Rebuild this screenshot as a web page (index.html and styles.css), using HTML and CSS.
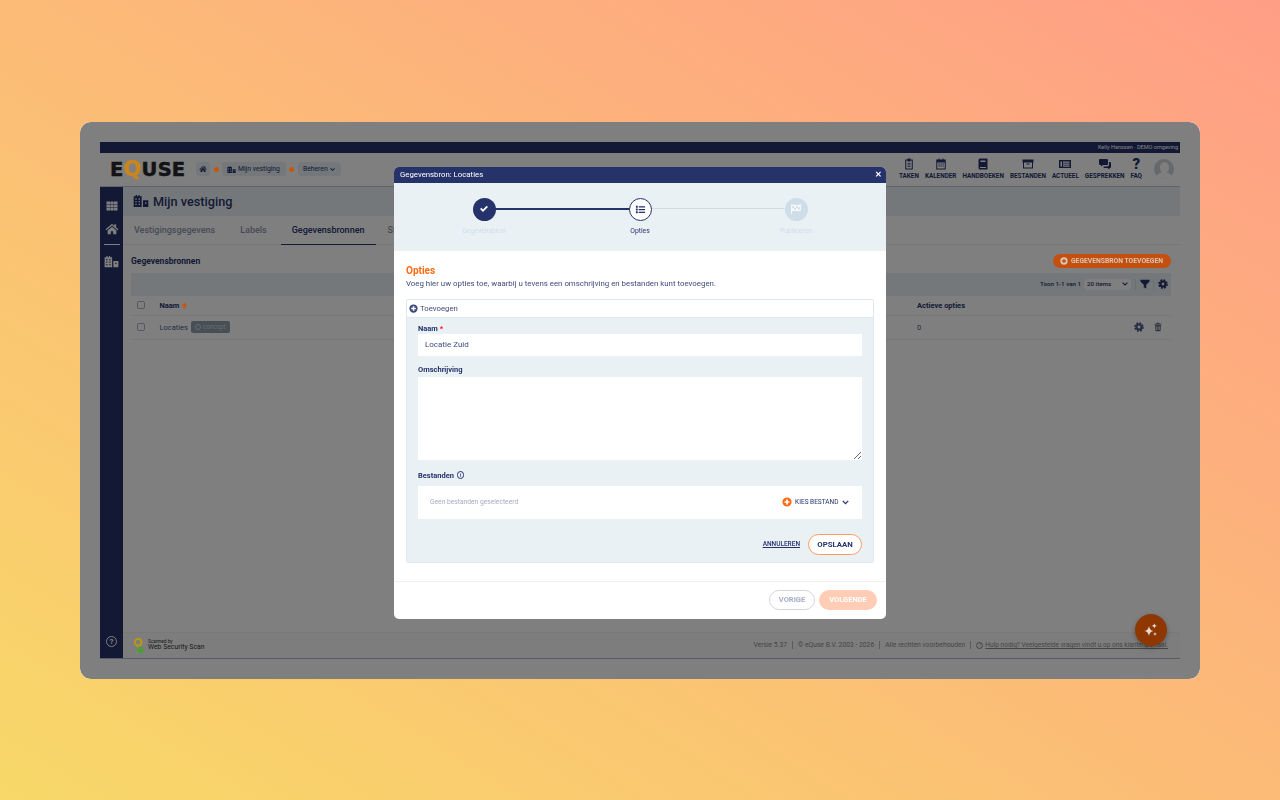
FILE: index.html
```html
<!DOCTYPE html>
<html>
<head>
    <title>eQuse - Gegevensbronnen</title>
    <meta charset="utf-8">
    <link rel="stylesheet" href="styles.css">
</head>
<body>
    <svg class="sprite" width="0" height="0">
        <symbol id="i-home" viewBox="0 0 24 24"><path d="M12 3 1 12.500l1.500 1.600L12 6l9.500 8.100 1.500-1.600-4-3.400V4h-3v2.900zM4.500 14.500V21H10v-5h4v5h5.500v-6.500L12 8z"/></symbol>
        <symbol id="i-grid" viewBox="0 0 24 24"><path d="M1 3h7v5.500H1zM8.800 3h6.400v5.500H8.800zM16 3h7v5.500h-7zM1 9.300h7v5.400H1zM8.800 9.300h6.400v5.400H8.800zM16 9.300h7v5.400h-7zM1 15.500h7V21H1zM8.800 15.500h6.400V21H8.800zM16 15.500h7V21h-7z"/></symbol>
        <symbol id="i-building" viewBox="0 0 24 24"><path fill-rule="evenodd" d="M1 5h3V3h2v2h2V3h2v2h3v16H1zM3.500 8v2h2V8zM8.500 8v2h2V8zM3.500 12v2h2v-2zM8.500 12v2h2v-2zM3.500 16v2h2v-2zM8.500 16v2h2v-2zM15 11h8v10h-8zM18 14v2h2v-2z"/></symbol>
        <symbol id="i-clipboard" viewBox="0 0 24 24"><path fill-rule="evenodd" d="M9 1h6v2h4.500v20h-15V3H9zM6.500 5v16h11V5H15v2H9V5zM9 10h6v1.500H9zM9 13h6v1.500H9zM9 16h6v1.500H9z"/></symbol>
        <symbol id="i-calendar" viewBox="0 0 24 24"><path fill-rule="evenodd" d="M7 1h2v2h6V1h2v2h4.500v20h-19V3H7zM4.500 9v12h15V9zM7 11h2.500v2H7zM11 11h2.500v2H11zM15 11h2.500v2H15zM7 15h2.500v2H7zM11 15h2.500v2H11zM15 15h2.500v2H15z"/></symbol>
        <symbol id="i-book" viewBox="0 0 24 24"><path fill-rule="evenodd" d="M6 1h15v22H6a3 3 0 0 1-3-3V4a3 3 0 0 1 3-3zM7 5v3h10V5zM6 18v2h12v-2z"/></symbol>
        <symbol id="i-archive" viewBox="0 0 24 24"><path fill-rule="evenodd" d="M1 3h22v6h-1v12H2V9H1zM4 9v10h16V9zM9 11h6v2H9z"/></symbol>
        <symbol id="i-news" viewBox="0 0 24 24"><path fill-rule="evenodd" d="M0 4h24v16H0zM3 7v10h3V7zM8 7v2.500h13V7zM8 11v2.500h13V11zM8 15v2.500h13V15z"/></symbol>
        <symbol id="i-chat" viewBox="0 0 24 24"><path d="M2 2h14a2 2 0 0 1 2 2v8a2 2 0 0 1-2 2H8l-4 3v-3H2a2 2 0 0 1-2-2V4a2 2 0 0 1 2-2zM20 8h2a2 2 0 0 1 2 2v8a2 2 0 0 1-2 2h-1v3l-4-3h-6a2 2 0 0 1-2-2v-1h7a4 4 0 0 0 4-4z"/></symbol>
        <symbol id="i-filter" viewBox="0 0 24 24"><path d="M1 2h22v4l-8 8v9l-6-3.500V14L1 6z"/></symbol>
        <symbol id="i-gear" viewBox="0 0 24 24"><circle cx="12" cy="12" r="6" fill="none" stroke="currentColor" stroke-width="5"/><circle cx="12" cy="12" r="9.500" fill="none" stroke="currentColor" stroke-width="4" stroke-dasharray="4.500 2.960"/></symbol>
        <symbol id="i-trash" viewBox="0 0 24 24"><path fill-rule="evenodd" d="M9 2h6l1 2h5v2H3V4h5zM5 7h14l-1 15H6zM8 10v9h1.500v-9zM11.200 10v9h1.600v-9zM14.500 10v9H16v-9z"/></symbol>
        <symbol id="i-plus" viewBox="0 0 24 24"><path fill-rule="evenodd" d="M12 1a11 11 0 1 1 0 22 11 11 0 0 1 0-22zM10 6v4H6v4h4v4h4v-4h4v-4h-4V6z"/></symbol>
        <symbol id="i-check" viewBox="0 0 24 24"><path d="M9.500 19 2.500 12l3-3 4 4 9-9 3 3z"/></symbol>
        <symbol id="i-list" viewBox="0 0 24 24"><path d="M2 4h4v4H2zM8 5h14v2.500H8zM2 10h4v4H2zM8 11h14v2.500H8zM2 16h4v4H2zM8 17h14v2.500H8z"/></symbol>
        <symbol id="i-flag" viewBox="0 0 24 24"><path fill-rule="evenodd" d="M2 3h2v1c4-2 6 0 9 0s5-.5 9-1.500V15c-4 1.500-6 2-9 1.500s-5-1-9 .5v5H2zM4 7v3c2-.8 3-.8 4-.7v-3C6.500 6 5.500 6.200 4 7zM8 9.300v3.200c1.500 0 3 .5 4 .7v-3.300c-1.500-.2-2.500-.5-4-.6zM12 9.900c1.500.2 3 0 4-.2V6.600c-1.500.3-2.500.4-4 .2zM16 9.700V13c1.500-.2 2.500-.5 4-1V8.700c-1.500.4-2.500.7-4 1z"/></symbol>
        <symbol id="i-sparkle" viewBox="0 0 24 24"><path d="M9 6c1 5 2.500 6.500 7 7.500-4.500 1-6 2.500-7 7.500-1-5-2.500-6.500-7-7.500 4.500-1 6-2.500 7-7.500zM17 2c.5 2.500 1.300 3.500 4 4-2.700.5-3.500 1.500-4 4-.5-2.500-1.300-3.500-4-4 2.700-.5 3.500-1.500 4-4zM18 15c.4 2 1 2.600 3 3-2 .4-2.600 1-3 3-.4-2-1-2.600-3-3 2-.4 2.600-1 3-3z"/></symbol>
        <symbol id="i-chevron" viewBox="0 0 24 24"><path d="M12 19 1 8l3-3 8 8 8-8 3 3z"/></symbol>
        <symbol id="i-arrow" viewBox="0 0 24 24"><path d="M12 2 22 13h-6v9H8v-9H2z"/></symbol>
        <symbol id="i-seal" viewBox="0 0 24 36"><path class="seal-gold" fill-rule="evenodd" d="M11 1a10 10 0 0 1 3 19.500V32l-5 3V20.500A10 10 0 0 1 11 1zm0 5a5 5 0 1 0 0 10 5 5 0 0 0 0-10z"/><circle class="seal-green" cx="16" cy="28" r="7.500"/></symbol>
    </svg>

    <div class="window">
        <div class="app">
            <div class="topbar">Kelly Hanssen · DEMO omgeving</div>

            <header class="header">
                <div class="logo">E<span class="logo-q vivid">Q</span>USE</div>
                <div class="crumbs">
                    <span class="crumb crumb-home"><svg class="ico ico-8"><use href="#i-home"/></svg></span>
                    <span class="crumb-dot vivid"></span>
                    <span class="crumb"><svg class="ico ico-9"><use href="#i-building"/></svg>Mijn vestiging</span>
                    <span class="crumb-dot vivid"></span>
                    <span class="crumb">Beheren <svg class="ico ico-5"><use href="#i-chevron"/></svg></span>
                </div>
                <nav class="topnav">
                    <a class="nav-item"><svg class="ico ico-12"><use href="#i-clipboard"/></svg>Taken</a>
                    <a class="nav-item"><svg class="ico ico-12"><use href="#i-calendar"/></svg>Kalender</a>
                    <a class="nav-item"><svg class="ico ico-12"><use href="#i-book"/></svg>Handboeken</a>
                    <a class="nav-item"><svg class="ico ico-12"><use href="#i-archive"/></svg>Bestanden</a>
                    <a class="nav-item"><svg class="ico ico-12"><use href="#i-news"/></svg>Actueel</a>
                    <a class="nav-item"><svg class="ico ico-12"><use href="#i-chat"/></svg>Gesprekken</a>
                    <a class="nav-item"><span class="faq-mark">?</span>FAQ</a>
                </nav>
                <div class="avatar"></div>
            </header>

            <div class="body">
                <aside class="sidebar">
                    <svg class="ico ico-12"><use href="#i-grid"/></svg>
                    <svg class="ico ico-14 side-home"><use href="#i-home"/></svg>
                    <span class="side-rule"></span>
                    <svg class="ico ico-15"><use href="#i-building"/></svg>
                    <span class="side-help">?</span>
                </aside>

                <main class="main">
                    <div class="title-band">
                        <svg class="ico ico-16"><use href="#i-building"/></svg>
                        <h1>Mijn vestiging<span class="title-dot vivid">.</span></h1>
                    </div>
                    <div class="tabs">
                        <a class="tab">Vestigingsgegevens</a>
                        <a class="tab">Labels</a>
                        <a class="tab tab-active">Gegevensbronnen</a>
                        <a class="tab">Statussen</a>
                    </div>
                    <div class="content">
                        <div class="content-head">
                            <h2>Gegevensbronnen</h2>
                            <button class="add-btn vivid"><svg class="ico ico-8"><use href="#i-plus"/></svg>Gegevensbron toevoegen</button>
                        </div>
                        <div class="toolbar">
                            <span class="toolbar-count">Toon 1-1 van 1</span>
                            <span class="page-size">20 items <svg class="ico ico-6"><use href="#i-chevron"/></svg></span>
                            <span class="tool"><svg class="ico ico-10"><use href="#i-filter"/></svg></span>
                            <span class="tool"><svg class="ico ico-10"><use href="#i-gear"/></svg></span>
                        </div>
                        <div class="row row-head">
                            <span class="box"></span>
                            <span class="cell-name">Naam <svg class="ico ico-7 sort vivid"><use href="#i-arrow"/></svg></span>
                            <span class="cell-count">Actieve opties</span>
                        </div>
                        <div class="row">
                            <span class="box"></span>
                            <span class="cell-name">Locaties <span class="badge"><span class="badge-clock"></span>concept</span></span>
                            <span class="cell-count">0</span>
                            <span class="row-actions">
                                <svg class="ico ico-10"><use href="#i-gear"/></svg>
                                <svg class="ico ico-10 ico-muted"><use href="#i-trash"/></svg>
                            </span>
                        </div>
                    </div>
                    <footer class="footer">
                        <div class="scan">
                            <svg class="seal vivid"><use href="#i-seal"/></svg>
                            <span class="scan-text"><small>Scanned by</small>Web Security Scan</span>
                        </div>
                        <div class="footer-links">
                            <span>Versie 5.37</span>
                            <span>© eQuse B.V. 2003 - 2026</span>
                            <span>Alle rechten voorbehouden</span>
                            <i class="help-mark">?</i>
                            <a>Hulp nodig? Veelgestelde vragen vindt u op ons klantenportaal.</a>
                        </div>
                    </footer>
                </main>
            </div>
        </div>

        <div class="overlay"></div>
        <button class="fab"><svg class="ico ico-16"><use href="#i-sparkle"/></svg></button>

        <section class="modal">
            <div class="modal-title">
                <span>Gegevensbron: Locaties</span>
                <span class="modal-close">✕</span>
            </div>
            <div class="stepper">
                <div class="step step-done">
                    <span class="step-dot"><svg class="ico ico-10"><use href="#i-check"/></svg></span>
                    <span class="step-label">Gegevensbron</span>
                </div>
                <div class="step step-current">
                    <span class="step-dot"><svg class="ico ico-11"><use href="#i-list"/></svg></span>
                    <span class="step-label">Opties</span>
                </div>
                <div class="step">
                    <span class="step-dot"><svg class="ico ico-12"><use href="#i-flag"/></svg></span>
                    <span class="step-label">Publiceren</span>
                </div>
            </div>
            <div class="modal-body">
                <h3>Opties</h3>
                <p>Voeg hier uw opties toe, waarbij u tevens een omschrijving en bestanden kunt toevoegen.</p>
                <div class="panel">
                    <div class="panel-head"><svg class="ico ico-9"><use href="#i-plus"/></svg>Toevoegen</div>
                    <form class="panel-body">
                        <label>Naam <em>*</em></label>
                        <input class="field" type="text" value="Locatie Zuid">
                        <label class="label-gap">Omschrijving</label>
                        <textarea class="field field-area"></textarea>
                        <label class="label-files">Bestanden <span class="info">i</span></label>
                        <div class="file-box">
                            <span class="file-empty">Geen bestanden geselecteerd</span>
                            <span class="file-pick"><svg class="ico ico-10 ico-orange"><use href="#i-plus"/></svg>Kies bestand<svg class="ico ico-7"><use href="#i-chevron"/></svg></span>
                        </div>
                        <div class="panel-actions">
                            <a class="cancel">Annuleren</a>
                            <button class="save" type="button">Opslaan</button>
                        </div>
                    </form>
                </div>
            </div>
            <div class="modal-foot">
                <button class="btn-prev">Vorige</button>
                <button class="btn-next">Volgende</button>
            </div>
        </section>
    </div>
</body>
</html>
```

FILE: styles.css
```css
* {
    box-sizing: border-box;
}
body {
    margin: 0;
    height: 800px;
    display: flex;
    align-items: center;
    justify-content: center;
    overflow: hidden;
    font-family: Roboto, "Liberation Sans", sans-serif;
    color: #26336b;
    background: linear-gradient(to top right, #f8d868, #ff9e86);
}
.sprite {
    position: absolute;
}
.ico {
    fill: currentColor;
    flex: none;
}
.ico-5 { width: 5px; height: 5px; }
.ico-6 { width: 6px; height: 6px; }
.ico-7 { width: 7px; height: 7px; }
.ico-8 { width: 8px; height: 8px; }
.ico-9 { width: 9px; height: 9px; }
.ico-10 { width: 10px; height: 10px; }
.ico-11 { width: 11px; height: 11px; }
.ico-12 { width: 12px; height: 12px; }
.ico-14 { width: 14px; height: 14px; }
.ico-15 { width: 15px; height: 15px; }
.ico-16 { width: 16px; height: 16px; }
.ico-muted { color: #5c6a80; }
.ico-orange { color: #ff6a13; }

/* window with the dimmed app */
.window {
    position: relative;
    width: 1120px;
    height: 557px;
    padding: 20px;
    border-radius: 11px;
    overflow: hidden;
    background: #fff;
}
.app {
    height: 517px;
    display: flex;
    flex-direction: column;
    border-bottom: 1px solid #b0b8cc;
}
.overlay {
    position: absolute;
    inset: 0;
    z-index: 2;
    background: rgba(0,0,0,0.5);
    -webkit-backdrop-filter: blur(0.7px);
    backdrop-filter: blur(0.7px);
}
/* orange and gold stay brighter than the backdrop lets them */
.vivid {
    position: relative;
    z-index: 3;
    filter: blur(0.4px);
}
.topbar {
    height: 11px;
    padding-right: 2px;
    background: #26336b;
    color: #fff;
    font-size: 5.550px;
    line-height: 11px;
    text-align: right;
}
.header {
    height: 34px;
    display: flex;
    align-items: center;
    padding-left: 10px;
    border-bottom: 1px solid #c3cad2;
}
.logo {
    width: 86px;
    font-family: "DejaVu Sans", sans-serif;
    font-size: 19.500px;
    font-weight: bold;
    line-height: 1;
    letter-spacing: 0.2px;
    color: #26262b;
    -webkit-text-stroke: 0.5px #26262b;
}
.logo-q {
    font-size: 21px;
    color: #c9861f;
    -webkit-text-stroke: 0.5px #c9861f;
}
.crumbs {
    display: flex;
    align-items: center;
    gap: 3.500px;
    font-size: 6.800px;
}
.crumb {
    height: 14px;
    display: flex;
    align-items: center;
    gap: 2px;
    padding: 0 6px 0 5px;
    border-radius: 3px;
    background: #e9f1f5;
}
.crumb-home {
    padding: 0 3px;
}
.crumb-dot {
    width: 5px;
    height: 5px;
    border-radius: 50%;
    background: #c8560a;
}
.topnav {
    margin-left: auto;
    display: flex;
    gap: 6px;
}
.nav-item {
    display: flex;
    flex-direction: column;
    align-items: center;
    gap: 3px;
    font-size: 6.350px;
    font-weight: 700;
    line-height: 7px;
    text-transform: uppercase;
}
.faq-mark {
    height: 12px;
    font-size: 15px;
    line-height: 12px;
    font-weight: 900;
}
.avatar {
    position: relative;
    width: 20px;
    height: 20px;
    margin: 0 6px 0 12px;
    border-radius: 50%;
    overflow: hidden;
    background: #cdd1d4;
}
.avatar::before {
    content: "";
    position: absolute;
    left: 5.500px;
    top: 3px;
    width: 9px;
    height: 11px;
    border-radius: 50%;
    background: #fff;
}
.avatar::after {
    content: "";
    position: absolute;
    left: 2px;
    top: 13px;
    width: 16px;
    height: 12px;
    border-radius: 50%;
    background: #fff;
}
.body {
    flex: 1;
    display: flex;
    min-height: 0;
}
.sidebar {
    width: 23px;
    display: flex;
    flex-direction: column;
    align-items: center;
    padding-top: 13px;
    background: #26336b;
    color: #fff;
}
.side-home {
    margin-top: 10px;
}
.side-rule {
    width: 16px;
    height: 1px;
    margin: 8px 0 9px;
    background: #fff;
}
.side-help {
    width: 11px;
    height: 11px;
    margin-top: auto;
    margin-bottom: 11px;
    border: 1px solid #fff;
    border-radius: 50%;
    font-size: 8px;
    font-weight: 700;
    line-height: 9px;
    text-align: center;
}
.main {
    flex: 1;
    display: flex;
    flex-direction: column;
}
.title-band {
    height: 29px;
    display: flex;
    align-items: center;
    gap: 4px;
    padding-left: 10px;
    background: #e9f1f5;
}
h1 {
    margin: 0;
    font-size: 12.700px;
    font-weight: 500;
}
.title-dot {
    color: #c8560a;
}
.tabs {
    height: 29px;
    display: flex;
    border-bottom: 1px solid #e9edf0;
}
.tab {
    padding: 0 12px 0 11px;
    font-size: 9px;
    font-weight: 500;
    line-height: 29px;
    color: #8d97ad;
}
.tab:first-child {
    padding-right: 14px;
}
.tab:nth-child(2) {
    padding-right: 14px;
}
.tab-active {
    height: 29px;
    color: #26336b;
    border-bottom: 1.500px solid #26336b;
}
.content {
    flex: 1;
    padding: 6px 9px 0 8px;
}
.content-head {
    height: 20px;
    display: flex;
    align-items: center;
    justify-content: space-between;
}
h2 {
    margin: 0;
    font-size: 8.500px;
    font-weight: 700;
}
.add-btn {
    height: 14px;
    display: flex;
    align-items: center;
    gap: 3px;
    padding: 0 8px 0 7px;
    border: 0;
    border-radius: 7px;
    background: #c4500f;
    color: #d9c4b4;
    font-family: inherit;
    font-size: 6.750px;
    font-weight: 700;
    text-transform: uppercase;
}
.toolbar {
    height: 23px;
    margin-top: 2px;
    display: flex;
    align-items: center;
    justify-content: flex-end;
    gap: 1px;
    padding-right: 1px;
    background: #e9f1f5;
    font-size: 6.200px;
    font-weight: 500;
}
.toolbar-count {
    margin-right: 2px;
}
.tool {
    height: 11px;
    display: flex;
    align-items: center;
    padding: 0 2px 0 4px;
    border-left: 1px solid #d3dee6;
}
.page-size {
    width: 47px;
    height: 11px;
    display: flex;
    align-items: center;
    justify-content: space-between;
    margin-right: 3px;
    padding: 0 3px;
    border-radius: 4px;
    background: #fff;
}
.row {
    height: 23.500px;
    display: flex;
    align-items: center;
    padding-left: 6px;
    border-bottom: 1px solid #e9edf0;
    font-size: 7.500px;
    color: #4e5b84;
}
.row-head {
    height: 20.500px;
    font-weight: 700;
    color: #26336b;
}
.box {
    width: 8px;
    height: 8px;
    border: 1px solid #a9b2c2;
    border-radius: 2px;
    background: #fff;
}
.cell-name {
    display: flex;
    align-items: center;
    gap: 2px;
    width: 772px;
    padding-left: 14.500px;
}
.sort {
    color: #c8560a;
}
.badge {
    height: 12px;
    display: flex;
    align-items: center;
    gap: 2px;
    margin-left: 1px;
    padding: 0 4px;
    border-radius: 2px;
    background: #8f9cab;
    color: #d3d9df;
    font-size: 6.300px;
}
.badge-clock {
    width: 6px;
    height: 6px;
    border: 1px solid #d3d9df;
    border-radius: 50%;
}
.row-actions {
    margin-left: auto;
    margin-right: 8px;
    display: flex;
    gap: 9px;
}
.footer {
    height: 26px;
    display: flex;
    align-items: center;
    justify-content: space-between;
    padding: 0 12px 0 10px;
    border-top: 1px solid #f2f2f2;
    background: #fbfbfb;
}
.scan {
    display: flex;
    align-items: center;
    gap: 4px;
}
.seal {
    width: 11px;
    height: 17px;
}
.seal-gold {
    fill: #b8951f;
}
.seal-green {
    fill: #4f9a3f;
}
.scan-text {
    display: flex;
    flex-direction: column;
    font-size: 6.850px;
    line-height: 7.500px;
    color: #333;
}
.scan-text small {
    font-size: 4.800px;
    line-height: 5px;
}
.footer-links {
    display: flex;
    align-items: center;
    font-size: 6.750px;
    color: #8b8b8b;
}
.footer-links span {
    padding-right: 5px;
    margin-right: 5px;
    border-right: 1px solid #b9b9b9;
}
.help-mark {
    width: 7px;
    height: 7px;
    margin-right: 2px;
    border: 0.8px solid #8b8b8b;
    border-radius: 50%;
    font-size: 5px;
    font-style: normal;
    line-height: 5.500px;
    text-align: center;
}
.footer-links a {
    font-size: 6.550px;
    text-decoration: underline;
}
.fab {
    position: absolute;
    left: 1055px;
    top: 492px;
    z-index: 3;
    width: 32px;
    height: 32px;
    display: flex;
    align-items: center;
    justify-content: center;
    padding: 0;
    border: 0;
    border-radius: 50%;
    background: #8f3700;
    color: #e6ddd6;
    box-shadow: 0 2px 5px rgba(0,0,0,0.3);
}

/* modal */
.modal {
    position: absolute;
    left: 314px;
    top: 45px;
    z-index: 4;
    width: 492px;
    height: 452px;
    display: flex;
    flex-direction: column;
    border-radius: 5px;
    overflow: hidden;
    background: #fff;
    filter: blur(0.25px);
}
.modal-title {
    height: 16px;
    display: flex;
    align-items: center;
    justify-content: space-between;
    padding: 0 4px 0 6px;
    background: #26336b;
    color: #fff;
    font-size: 7.800px;
}
.modal-close {
    font-size: 8px;
    font-weight: 700;
}
.stepper {
    position: relative;
    height: 68px;
    display: grid;
    grid-template-columns: repeat(3, 156px);
    justify-content: center;
    padding-top: 15px;
    background: #e9f1f5;
}
.step {
    position: relative;
    display: flex;
    flex-direction: column;
    align-items: center;
    gap: 6px;
}
.step:not(:last-child)::after {
    content: "";
    position: absolute;
    left: 50%;
    top: 10.500px;
    width: 100%;
    height: 1px;
    background: #cfdde8;
}
.step-done:not(:last-child)::after {
    height: 1.500px;
    background: #26336b;
}
.step-dot {
    position: relative;
    z-index: 1;
    width: 23px;
    height: 23px;
    display: flex;
    align-items: center;
    justify-content: center;
    border-radius: 50%;
    background: #cfdde8;
    color: #f4f8fa;
}
.step-done .step-dot {
    background: #26336b;
    color: #fff;
}
.step-current .step-dot {
    border: 1.500px solid #26336b;
    background: #fff;
    color: #26336b;
}
.step-label {
    font-size: 6.800px;
    color: #cfdde8;
}
.step-current .step-label {
    color: #26336b;
}
.modal-body {
    flex: 1;
    padding: 13px 12px 0;
}
h3 {
    margin: 0;
    font-size: 10px;
    font-weight: 700;
    line-height: 13px;
    color: #ff6a13;
}
.modal-body p {
    margin: 1px 0 0;
    font-size: 7.870px;
    line-height: 11px;
    color: #3f4b7c;
}
.panel {
    height: 264px;
    margin-top: 10px;
    display: flex;
    flex-direction: column;
    border: 1px solid #dfe8ee;
    border-radius: 2px;
}
.panel-head {
    height: 18px;
    flex: none;
    display: flex;
    align-items: center;
    gap: 2px;
    padding-left: 2px;
    border-bottom: 1px solid #dfe8ee;
    font-size: 7.800px;
    color: #3f4b7c;
}
.panel-body {
    flex: 1;
    padding: 5px 11px 0;
    display: flex;
    flex-direction: column;
    background: #e9f1f5;
}
label {
    height: 11px;
    font-size: 7.500px;
    font-weight: 700;
    line-height: 11px;
}
label em {
    font-style: normal;
    color: #f01a1a;
}
.field {
    display: block;
    width: 100%;
    height: 22px;
    flex: none;
    border: 0;
    padding: 0 7px;
    background: #fff;
    color: #3f4b7c;
    font-family: inherit;
    font-size: 8px;
    outline: 0;
}
.label-gap {
    margin-top: 9px;
    margin-bottom: 2px;
    height: 10px;
    line-height: 10px;
}
.field-area {
    height: 83px;
    resize: vertical;
}
.label-files {
    margin-top: 10px;
    display: flex;
    align-items: center;
    gap: 3px;
}
.info {
    width: 7.500px;
    height: 7.500px;
    border: 0.8px solid #26336b;
    border-radius: 50%;
    font-size: 5.500px;
    font-weight: 500;
    line-height: 6px;
    text-align: center;
}
.file-box {
    height: 33px;
    flex: none;
    margin-top: 5px;
    display: flex;
    align-items: center;
    justify-content: space-between;
    padding: 0 13px 0 12px;
    background: #fff;
}
.file-empty {
    font-size: 6.700px;
    color: #a4acc0;
}
.file-pick {
    display: flex;
    align-items: center;
    gap: 3.500px;
    font-size: 6.500px;
    text-transform: uppercase;
}
.panel-actions {
    margin-top: 15px;
    display: flex;
    align-items: center;
    justify-content: flex-end;
    gap: 8px;
}
.cancel {
    font-size: 6.500px;
    font-weight: 500;
    text-decoration: underline;
    text-transform: uppercase;
}
.save {
    width: 54px;
    height: 21px;
    border: 1px solid #ff9a5c;
    border-radius: 11px;
    background: #fff;
    color: #26336b;
    font-family: inherit;
    font-size: 7.800px;
    font-weight: 700;
    text-transform: uppercase;
}
.modal-foot {
    height: 38px;
    display: flex;
    align-items: flex-start;
    justify-content: flex-end;
    gap: 4px;
    padding: 8px 9px 0;
    border-top: 1px solid #eef2f5;
}
.btn-prev,
.btn-next {
    height: 20px;
    border-radius: 10px;
    font-family: inherit;
    font-size: 7.500px;
    font-weight: 700;
    text-transform: uppercase;
}
.btn-prev {
    width: 46px;
    border: 1px solid #d4d6e1;
    background: #fff;
    color: #a8adc4;
}
.btn-next {
    width: 58px;
    border: 0;
    background: #ffcdb5;
    color: #fff;
}
```
